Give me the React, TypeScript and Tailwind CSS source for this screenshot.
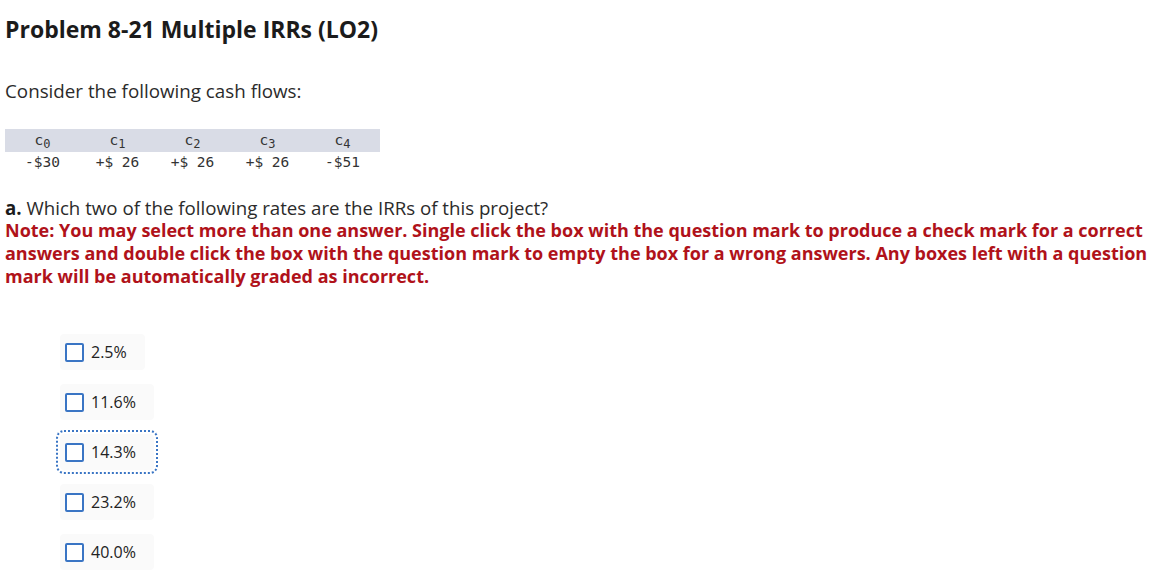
const flows = [
  { sub: '0', value: '-$30' },
  { sub: '1', value: '+$ 26' },
  { sub: '2', value: '+$ 26' },
  { sub: '3', value: '+$ 26' },
  { sub: '4', value: '-$51' },
]

const rates = ['2.5%', '11.6%', '14.3%', '23.2%', '40.0%']

const noteLines = [
  'Note: You may select more than one answer. Single click the box with the question mark to produce a check mark for a correct',
  'answers and double click the box with the question mark to empty the box for a wrong answers. Any boxes left with a question',
  'mark will be automatically graded as incorrect.',
]

export default function App() {
  return (
    <div className="min-h-[585px] bg-white px-[5px] text-[#212121] font-['Open_Sans',sans-serif]">
      <h1 className="pt-[15px] text-[23px] font-bold leading-[28px] text-[#1b1b1b]">
        Problem 8-21 Multiple IRRs (LO2)
      </h1>

      <p className="mt-[35px] text-[18.8px] leading-[26px] text-[#2b2b2b]">Consider the following cash flows:</p>

      {/* Cash flow table */}
      <table className="mt-[25px] w-[375px] table-fixed border-collapse font-['DejaVu_Sans_Mono','Liberation_Mono',monospace] text-[14.5px] text-[#333]">
        <thead>
          <tr className="bg-[#d9dce6]">
            {flows.map((f) => (
              <th key={f.sub} className="h-[23px] p-0 font-normal leading-none">
                c<sub className="text-[12px]">{f.sub}</sub>
              </th>
            ))}
          </tr>
        </thead>
        <tbody>
          <tr>
            {flows.map((f) => (
              <td key={f.sub} className="h-[20px] p-0 text-center leading-none">
                {f.value}
              </td>
            ))}
          </tr>
        </tbody>
      </table>

      <div className="mt-[24px] leading-[23px]">
        <p className="text-[18.7px] text-[#2b2b2b]">
          <b className="text-[#1b1b1b]">a.</b> Which two of the following rates are the IRRs of this project?
        </p>
        <p className="text-[18px] font-bold text-[#b0121a]">
          {noteLines.map((l) => (
            <span key={l} className="block whitespace-nowrap">
              {l}
            </span>
          ))}
        </p>
      </div>

      <ul className="mt-[46px] flex flex-col gap-[14px] pl-[55px]">
        {rates.map((r, i) => (
          <li key={r} className="flex">
            <label
              className={
                'flex h-[36px] items-center gap-[7px] rounded-[4px] bg-[#fafafa] pl-[5px] pr-[18px] text-[16px] text-[#222] ' +
                (i === 2 ? 'outline-2 outline-dotted outline-offset-[2px] outline-[#3a75c4]' : '')
              }
            >
              <span className="h-[19px] w-[19px] rounded-[2px] border-2 border-[#3a75c4] bg-white" />
              {r}
            </label>
          </li>
        ))}
      </ul>
    </div>
  )
}
